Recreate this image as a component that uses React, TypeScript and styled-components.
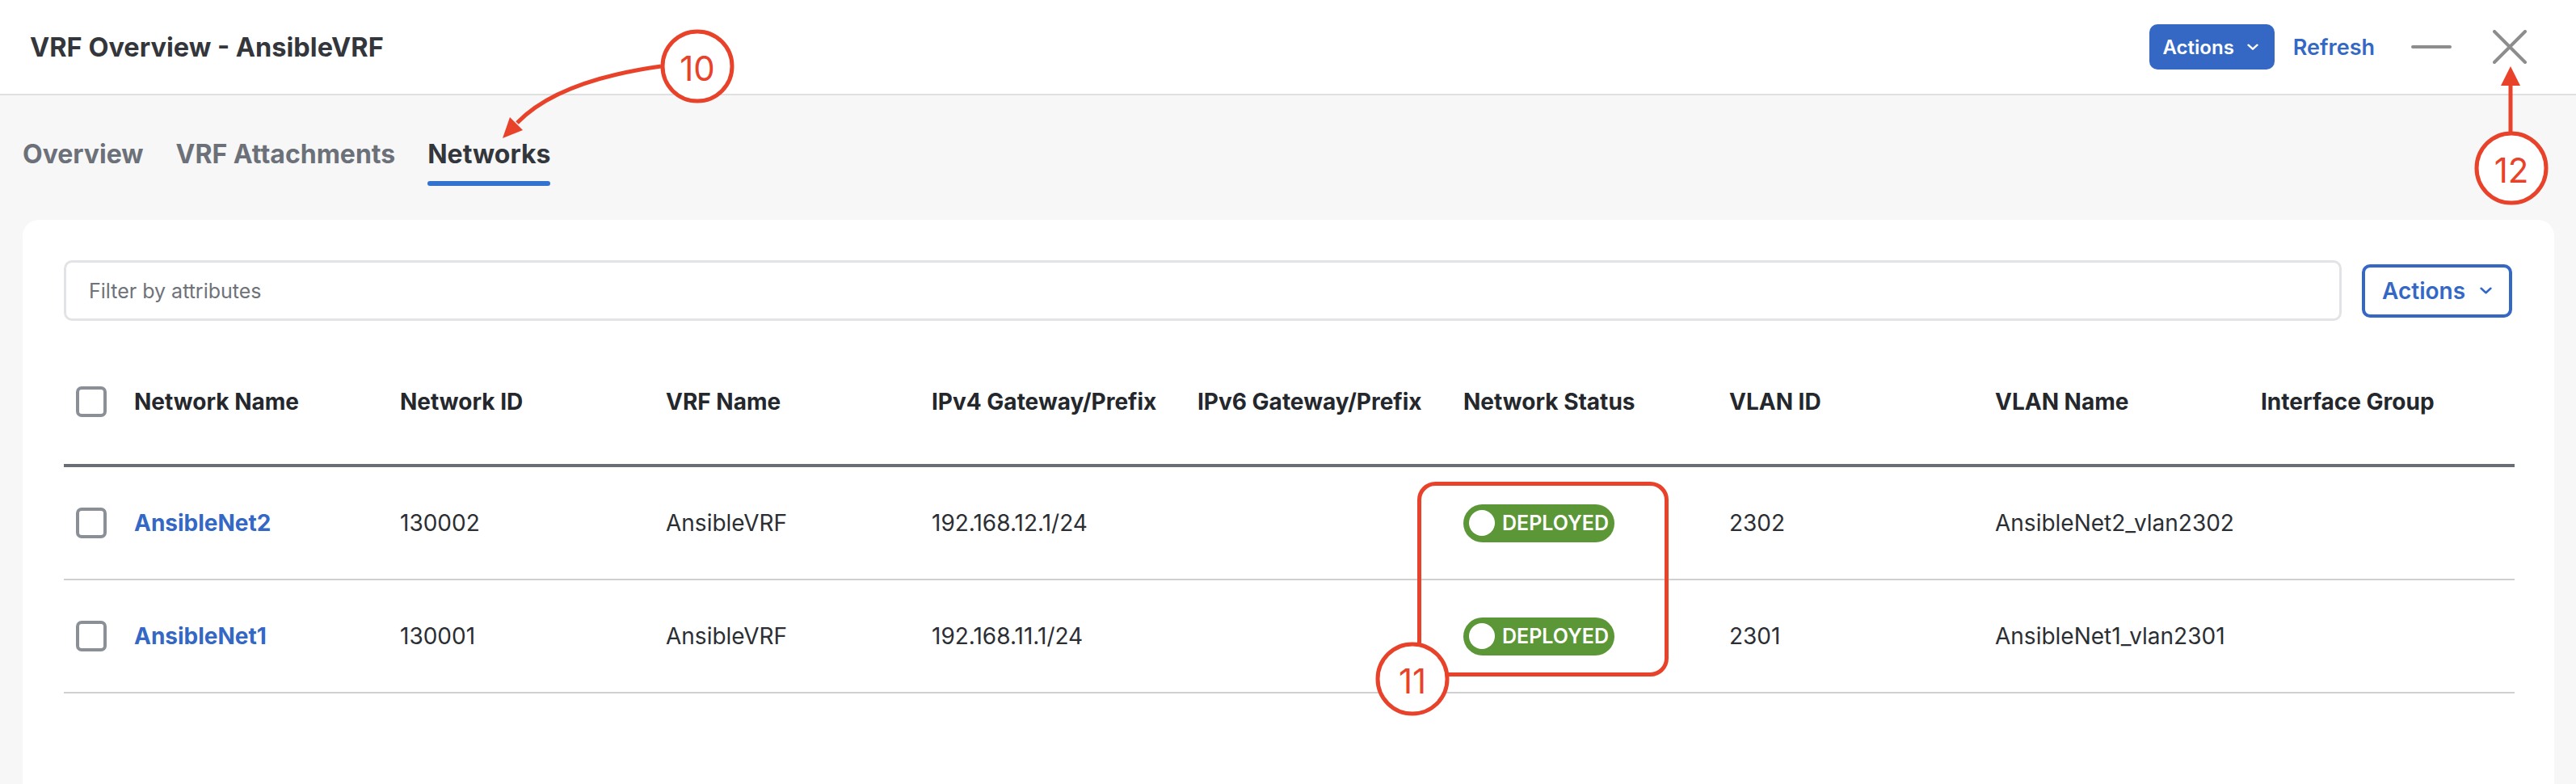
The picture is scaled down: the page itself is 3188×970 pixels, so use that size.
import React from 'react';
import styled, { createGlobalStyle } from 'styled-components';

const GlobalStyle = createGlobalStyle`
  * { box-sizing: border-box; }
  body {
    margin: 0;
    background: #f7f7f7;
    font-family: Inter, "Noto Sans", sans-serif;
  }
`;

const BLUE = '#3468c4';
const RED = '#e8432a';

type Network = {
  name: string;
  id: string;
  vrf: string;
  ipv4: string;
  ipv6: string;
  status: string;
  vlanId: string;
  vlanName: string;
  group: string;
};

const networks: Network[] = [
  { name: 'AnsibleNet2', id: '130002', vrf: 'AnsibleVRF', ipv4: '192.168.12.1/24', ipv6: '', status: 'DEPLOYED', vlanId: '2302', vlanName: 'AnsibleNet2_vlan2302', group: '' },
  { name: 'AnsibleNet1', id: '130001', vrf: 'AnsibleVRF', ipv4: '192.168.11.1/24', ipv6: '', status: 'DEPLOYED', vlanId: '2301', vlanName: 'AnsibleNet1_vlan2301', group: '' },
];

const columns = ['Network Name', 'Network ID', 'VRF Name', 'IPv4 Gateway/Prefix', 'IPv6 Gateway/Prefix', 'Network Status', 'VLAN ID', 'VLAN Name', 'Interface Group'];

const Chevron = ({ size = 14 }: { size?: number }) => (
  <svg width={size} height={size * 0.6} viewBox="0 0 14 8" fill="none">
    <path d="M1.5 1.5 L7 6.5 L12.5 1.5" stroke="currentColor" strokeWidth="2.4" strokeLinecap="round" strokeLinejoin="round" />
  </svg>
);

export default function App() {
  return (
    <>
      <GlobalStyle />
      <Page>
        <Header>
          <Title>VRF Overview - AnsibleVRF</Title>
          <HeaderActions>
            <SolidButton>
              Actions <Chevron size={14} />
            </SolidButton>
            <TextLink>Refresh</TextLink>
            <Minimize />
            <CloseIcon width="42" height="42" viewBox="0 0 42 42">
              <path d="M2 2 L40 40 M40 2 L2 40" stroke="#8d8d8d" strokeWidth="4" strokeLinecap="round" />
            </CloseIcon>
          </HeaderActions>
        </Header>

        <TabBar>
          <Tab>
            <TabLabel>Overview</TabLabel>
            <TabIndicator />
          </Tab>
          <Tab>
            <TabLabel>VRF Attachments</TabLabel>
            <TabIndicator />
          </Tab>
          <Tab>
            <TabLabel $active>Networks</TabLabel>
            <TabIndicator $active />
          </Tab>
        </TabBar>

        <Card>
          <Toolbar>
            <FilterInput placeholder="Filter by attributes" />
            <OutlineButton>
              Actions <Chevron size={15} />
            </OutlineButton>
          </Toolbar>

          <Table>
            <HeadRow>
              <CheckCell>
                <Checkbox />
              </CheckCell>
              {columns.map((c) => (
                <HeadCell key={c}>{c}</HeadCell>
              ))}
            </HeadRow>
            {networks.map((n) => (
              <BodyRow key={n.name}>
                <CheckCell>
                  <Checkbox />
                </CheckCell>
                <Cell>
                  <NameLink>{n.name}</NameLink>
                </Cell>
                <Cell>{n.id}</Cell>
                <Cell>{n.vrf}</Cell>
                <Cell>{n.ipv4}</Cell>
                <Cell>{n.ipv6}</Cell>
                <Cell>
                  <StatusPill>
                    <StatusDot />
                    {n.status}
                  </StatusPill>
                </Cell>
                <Cell>{n.vlanId}</Cell>
                <Cell>{n.vlanName}</Cell>
                <Cell>{n.group}</Cell>
              </BodyRow>
            ))}
          </Table>
        </Card>

        <Annotations width="3188" height="970" viewBox="0 0 3188 970">
          {/* 10 */}
          <path d="M818 82 Q690 100 640 152" stroke={RED} strokeWidth="5" fill="none" />
          <polygon points="622,171 647,161 631,145" fill={RED} />
          <circle cx="863" cy="82" r="43" fill="#fff" stroke={RED} strokeWidth="5" />
          <text x="863" y="84" fill={RED} fontSize="42" textAnchor="middle" dominantBaseline="central" fontFamily="Inter, sans-serif">10</text>

          {/* 11 */}
          <rect x="1756.5" y="598.5" width="306" height="236" rx="20" fill="none" stroke={RED} strokeWidth="5" />
          <circle cx="1748" cy="840" r="43" fill="#fff" stroke={RED} strokeWidth="5" />
          <text x="1748" y="842" fill={RED} fontSize="42" textAnchor="middle" dominantBaseline="central" fontFamily="Inter, sans-serif">11</text>

          {/* 12 */}
          <line x1="3107" y1="165" x2="3107" y2="100" stroke={RED} strokeWidth="5" />
          <polygon points="3107,82 3095,106 3119,106" fill={RED} />
          <circle cx="3108" cy="208" r="43" fill="#fff" stroke={RED} strokeWidth="5" />
          <text x="3108" y="210" fill={RED} fontSize="42" textAnchor="middle" dominantBaseline="central" fontFamily="Inter, sans-serif">12</text>
        </Annotations>
      </Page>
    </>
  );
}

const Page = styled.div`
  position: relative;
  width: 3188px;
  height: 970px;
  overflow: hidden;
  display: flex;
  flex-direction: column;
  background: #f7f7f7;
`;

const Header = styled.header`
  display: flex;
  align-items: center;
  justify-content: space-between;
  height: 118px;
  padding: 0 61px 0 37px;
  background: #fff;
  border-bottom: 2px solid #e0e0e0;
`;

const Title = styled.h1`
  margin: 0;
  font-size: 32.5px;
  font-weight: 700;
  color: #33363b;
`;

const HeaderActions = styled.div`
  display: flex;
  align-items: center;
`;

const SolidButton = styled.button`
  display: flex;
  align-items: center;
  gap: 16px;
  height: 56px;
  padding: 0 20px 0 17px;
  border: none;
  border-radius: 10px;
  background: ${BLUE};
  color: #fff;
  font-family: inherit;
  font-size: 24px;
  font-weight: 600;
`;

const TextLink = styled.span`
  margin-left: 23px;
  font-size: 27px;
  font-weight: 600;
  color: ${BLUE};
`;

const Minimize = styled.span`
  display: block;
  width: 50px;
  height: 4px;
  margin-left: 45px;
  border-radius: 2px;
  background: #8d8d8d;
`;

const CloseIcon = styled.svg`
  display: block;
  margin-left: 51px;
`;

const TabBar = styled.nav`
  display: flex;
  gap: 40px;
  padding: 53px 0 0 28px;
  margin-bottom: 42px;
`;

const Tab = styled.div`
  display: flex;
  flex-direction: column;
  gap: 13px;
`;

const TabLabel = styled.span<{ $active?: boolean }>`
  font-size: 32px;
  line-height: 40px;
  font-weight: 700;
  color: ${({ $active }) => ($active ? '#33363b' : '#6c7179')};
`;

const TabIndicator = styled.span<{ $active?: boolean }>`
  height: 6px;
  border-radius: 3px;
  background: ${({ $active }) => ($active ? '#3273d0' : 'transparent')};
`;

const Card = styled.section`
  flex: 1;
  margin: 0 27px 0 28px;
  padding: 50px 49px 0 51px;
  background: #fff;
  border-radius: 20px 20px 0 0;
`;

const Toolbar = styled.div`
  display: flex;
  align-items: center;
  gap: 25px;
  padding-right: 3px;
`;

const FilterInput = styled.input`
  flex: 1;
  height: 75px;
  padding: 0 0 0 28px;
  border: 3px solid #e2e3e7;
  border-radius: 10px;
  font-family: inherit;
  font-size: 25px;
  color: #33363b;
  outline: none;
  &::placeholder {
    color: #6f7279;
  }
`;

const OutlineButton = styled.button`
  display: flex;
  align-items: center;
  justify-content: center;
  gap: 18px;
  width: 186px;
  height: 66px;
  border: 4px solid ${BLUE};
  border-radius: 10px;
  background: #fff;
  color: ${BLUE};
  font-family: inherit;
  font-size: 28px;
  font-weight: 600;
`;

const Table = styled.div`
  margin-top: 60px;
`;

const Row = styled.div`
  display: grid;
  grid-template-columns: 72px repeat(9, 329px);
  align-items: center;
`;

const HeadRow = styled(Row)`
  height: 121px;
  padding-bottom: 37px;
  border-bottom: 4px solid #696d75;
`;

const BodyRow = styled(Row)`
  height: 140px;
  border-bottom: 2px solid #d0d0d0;
`;

const CheckCell = styled.div`
  display: flex;
  padding-left: 15px;
`;

const Checkbox = styled.span`
  display: block;
  width: 38px;
  height: 38px;
  border: 4px solid #8b9097;
  border-radius: 7px;
  background: #fff;
`;

const HeadCell = styled.div`
  padding-left: 15px;
  font-size: 28px;
  font-weight: 700;
  color: #24272c;
  white-space: nowrap;
`;

const Cell = styled.div`
  padding-left: 15px;
  font-size: 28px;
  font-weight: 400;
  color: #2b2e33;
  white-space: nowrap;
`;

const NameLink = styled.span`
  font-weight: 700;
  color: ${BLUE};
`;

const StatusPill = styled.span`
  display: inline-flex;
  align-items: center;
  gap: 9px;
  width: 187px;
  height: 47px;
  padding: 0 0 0 7px;
  border-radius: 24px;
  background: #5b9637;
  color: #fff;
  font-size: 25px;
  font-weight: 600;
`;

const StatusDot = styled.span`
  width: 32px;
  height: 32px;
  border-radius: 50%;
  background: #fff;
`;

const Annotations = styled.svg`
  position: absolute;
  top: 0;
  left: 0;
  pointer-events: none;
`;
